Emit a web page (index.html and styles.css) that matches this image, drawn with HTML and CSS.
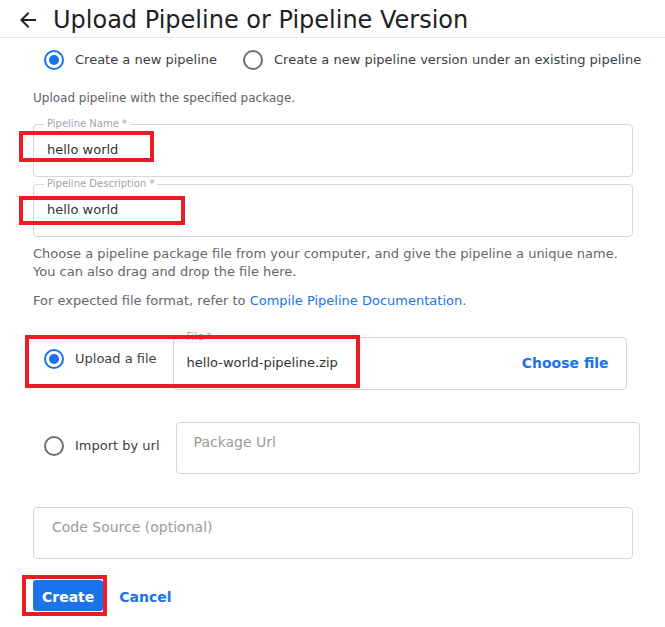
FILE: index.html
```html
<!DOCTYPE html>
<html lang="en">
<head>
<meta charset="utf-8">
<title>Upload Pipeline or Pipeline Version</title>
<link rel="stylesheet" href="styles.css">
</head>
<body>
<div class="page">
  <header class="topbar">
    <svg class="back-icon" viewBox="0 0 24 24" aria-hidden="true"><path d="M20 11H7.83l5.59-5.59L12 4l-8 8 8 8 1.41-1.41L7.83 13H20v-2z"/></svg>
    <h1 class="title">Upload Pipeline or Pipeline Version</h1>
  </header>

  <main class="form">
    <div class="mode-row">
      <label class="option option--spaced">
        <svg class="radio radio--on" viewBox="0 0 24 24"><circle cx="12" cy="12" r="9" class="ring"/><circle cx="12" cy="12" r="5" class="dot"/></svg>
        <span class="option-text">Create a new pipeline</span>
      </label>
      <label class="option">
        <svg class="radio" viewBox="0 0 24 24"><circle cx="12" cy="12" r="9" class="ring"/></svg>
        <span class="option-text">Create a new pipeline version under an existing pipeline</span>
      </label>
    </div>

    <p class="hint">Upload pipeline with the specified package.</p>

    <fieldset class="field">
      <legend class="field-label">Pipeline Name *</legend>
      <div class="field-value">hello world</div>
    </fieldset>

    <fieldset class="field field--next">
      <legend class="field-label">Pipeline Description *</legend>
      <div class="field-value">hello world</div>
    </fieldset>

    <p class="help help--first">Choose a pipeline package file from your computer, and give the pipeline a unique name.<br>You can also drag and drop the file here.</p>
    <p class="help help--second">For expected file format, refer to <a class="link" href="#">Compile Pipeline Documentation</a>.</p>

    <div class="source-row source-row--file">
      <label class="option option--file">
        <svg class="radio radio--on" viewBox="0 0 24 24"><circle cx="12" cy="12" r="9" class="ring"/><circle cx="12" cy="12" r="5" class="dot"/></svg>
        <span class="option-text">Upload a file</span>
      </label>
      <fieldset class="field field--file">
        <legend class="field-label">File *</legend>
        <div class="file-body">
          <span class="field-value field-value--file">hello-world-pipeline.zip</span>
          <button class="text-button" type="button">Choose file</button>
        </div>
      </fieldset>
    </div>

    <div class="source-row source-row--url">
      <label class="option option--url">
        <svg class="radio" viewBox="0 0 24 24"><circle cx="12" cy="12" r="9" class="ring"/></svg>
        <span class="option-text">Import by url</span>
      </label>
      <div class="outlined outlined--url"><span class="placeholder">Package Url</span></div>
    </div>

    <div class="outlined outlined--code"><span class="placeholder">Code Source (optional)</span></div>

    <div class="actions">
      <button class="primary-button" type="button">Create</button>
      <button class="text-button text-button--cancel" type="button">Cancel</button>
    </div>
  </main>

  <div class="mark mark--name"></div>
  <div class="mark mark--desc"></div>
  <div class="mark mark--upload"></div>
  <div class="mark mark--create"></div>
</div>
</body>
</html>
```

FILE: styles.css
```css
* { box-sizing: border-box; }

html, body {
  margin: 0;
  padding: 0;
  background: #ffffff;
}

body {
  font-family: "DejaVu Sans", sans-serif;
  color: #333333;
}

.page {
  position: relative;
  width: 665px;
  min-height: 627px;
}

/* Header */
.topbar {
  display: flex;
  align-items: center;
  height: 38px;
  padding: 3px 0 0 16px;
  border-bottom: 1px solid #e6e6e6;
}

.back-icon {
  width: 24px;
  height: 24px;
  fill: #202124;
  flex: none;
}

.title {
  margin: 0 0 0 13px;
  font-size: 24px;
  font-weight: normal;
  line-height: 28px;
  color: #202124;
  white-space: nowrap;
}

/* Form */
.form {
  padding-left: 33px;
  width: 665px;
}

.mode-row {
  display: flex;
  align-items: center;
  height: 42px;
  margin-top: 1px;
  padding-left: 9px;
}

.option {
  display: flex;
  align-items: center;
  gap: 9px;
  flex: none;
  font-size: 13px;
  line-height: 18px;
  color: #3c4043;
  white-space: nowrap;
}

.option--spaced { margin-right: 24px; }

.radio {
  width: 24px;
  height: 24px;
  flex: none;
}

.radio .ring {
  fill: none;
  stroke: #6f6f6f;
  stroke-width: 2;
}

.radio--on .ring { stroke: #1a73e8; }
.radio .dot { fill: #1a73e8; }

.hint {
  margin: 9px 0 12px;
  font-size: 12px;
  line-height: 16px;
  color: #5f6368;
}

/* Outlined fields with notched label */
.field {
  margin: 0;
  padding: 0 12px 0 10px;
  width: 600px;
  min-width: 0;
  border: 1px solid #d6d6d6;
  border-radius: 4px;
}

.field--next { margin-top: 1px; }

.field-label {
  padding: 0 3px;
  font-size: 10px;
  line-height: 12px;
  color: #a0a4a8;
}

.field-value {
  display: block;
  margin: 11px 0 17px 3px;
  font-size: 13px;
  line-height: 18px;
  color: #333333;
}

/* Help texts */
.help {
  margin: 0;
  font-size: 13px;
  line-height: 18px;
  color: #666666;
}

.help--first { margin-top: 8px; }
.help--second { margin-top: 11px; }

.link {
  color: #1a73e8;
  text-decoration: none;
}

/* Source rows */
.source-row {
  display: flex;
  align-items: flex-start;
  padding-left: 9px;
}

.source-row--file { margin-top: 21px; }
.source-row--url { margin-top: 32px; }

.option--file { margin-top: 16px; }
.option--url { margin-top: 12px; }

.field--file {
  flex: none;
  width: 454px;
  margin-left: 16px;
  padding-right: 17px;
}

.file-body {
  display: flex;
  align-items: center;
  justify-content: space-between;
  margin: 11px 0 17px 3px;
  height: 18px;
}

.field-value--file { margin: 0; }

.text-button {
  padding: 0;
  border: 0;
  background: none;
  font-family: "DejaVu Sans", sans-serif;
  font-size: 14px;
  font-weight: bold;
  line-height: 18px;
  color: #1a73e8;
  cursor: pointer;
}

.outlined {
  height: 52px;
  border: 1px solid #d6d6d6;
  border-radius: 4px;
  padding: 10px 17px 0;
}

.outlined--url {
  flex: none;
  width: 464px;
  margin-left: 16px;
}

.outlined--code {
  width: 600px;
  margin-top: 33px;
  padding-left: 18px;
}

.placeholder {
  display: block;
  font-size: 14px;
  line-height: 18px;
  color: #9a9a9a;
}

/* Actions */
.actions {
  display: flex;
  align-items: center;
  margin-top: 21px;
}

.primary-button {
  height: 31px;
  padding: 2px 9px 0;
  border: 0;
  border-radius: 3px;
  background: #1a73e8;
  color: #ffffff;
  font-family: "DejaVu Sans", sans-serif;
  font-size: 14px;
  font-weight: bold;
}

.text-button--cancel {
  margin-left: 16px;
  padding-top: 3px;
}

/* Red annotation boxes over the screenshot */
.mark {
  position: absolute;
  border: 4px solid #ed1c24;
  pointer-events: none;
}

.mark--name { left: 19px; top: 131px; width: 135px; height: 31px; }
.mark--desc { left: 19px; top: 196px; width: 166px; height: 29px; }
.mark--upload { left: 25px; top: 335px; width: 335px; height: 53px; }
.mark--create { left: 22px; top: 575px; width: 85px; height: 41px; }
```
